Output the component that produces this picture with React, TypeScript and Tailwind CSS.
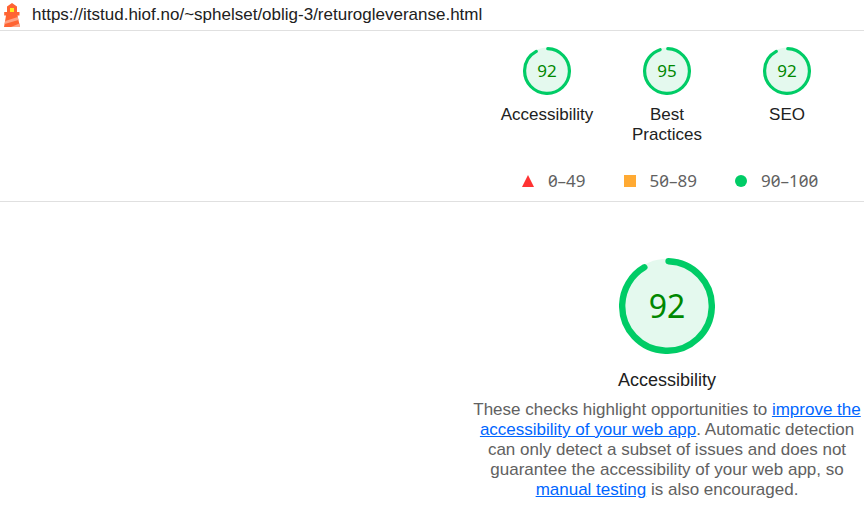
type GaugeProps = {
  score: number;
  size: 'small' | 'large';
};

function Gauge({ score, size }: GaugeProps) {
  const large = size === 'large';
  const stroke = 8;
  const r = 60 - stroke / 2;
  const circumference = 2 * Math.PI * r;
  const filled = (score / 100) * circumference - stroke / 2;
  return (
    <div className={large ? 'grid size-24 place-items-center' : 'grid size-12 place-items-center'}>
      <svg viewBox="0 0 120 120" className="col-start-1 row-start-1 size-full" aria-hidden="true">
        <circle cx="60" cy="60" r="59" fill="#e4f9ee" />
        <circle
          cx="60"
          cy="60"
          r={r}
          fill="none"
          stroke="#00cc66"
          strokeWidth={stroke}
          strokeLinecap="round"
          strokeDasharray={`${filled} ${circumference}`}
          transform="rotate(-88 60 60)"
        />
      </svg>
      <span
        className={
          large
            ? "col-start-1 row-start-1 font-['Noto_Sans',sans-serif] text-[32px] leading-10 text-[#008800]"
            : "col-start-1 row-start-1 font-['Noto_Sans',sans-serif] text-[17px] leading-5 text-[#008800]"
        }
      >
        {score}
      </span>
    </div>
  );
}

function Lighthouse() {
  return (
    <svg viewBox="0 0 24 30" className="h-[30px] w-6 shrink-0" aria-hidden="true">
      <path d="M12 3l5 3.500V12h2.500v3.500H17.500L20 27H4l2-11.500H4.200V12H7V6.500z" fill="#ff6433" />
      <path d="M10 8h4v4h-4z" fill="#ffea1e" />
      <path d="M17.800 17l.6 3L4.700 24l.6-3zM19.400 23.500l.6 3.500h-9z" fill="#ffa385" />
    </svg>
  );
}

const scores = [
  { label: 'Accessibility', score: 92 },
  { label: 'Best Practices', score: 95 },
  { label: 'SEO', score: 92 },
];

export default function App() {
  return (
    <div className="min-h-screen bg-white font-['Liberation_Sans',Arial,sans-serif] text-[#212121]">
      <header className="flex h-[31px] items-center gap-2 border-b border-[#e0e0e0]">
        <Lighthouse />
        <span className="text-[17px] leading-5">
          https://itstud.hiof.no/~sphelset/oblig-3/returogleveranse.html
        </span>
      </header>
      <main>
        <section className="border-b border-[#e0e0e0] pt-4 pb-[10px]">
          <div className="ml-auto w-[394px]">
            <div className="flex justify-center">
              {scores.map((item) => (
                <div key={item.label} className="flex w-[120px] flex-col items-center gap-[10px] px-3 text-center">
                  <Gauge score={item.score} size="small" />
                  <span className="text-[17px] leading-5">{item.label}</span>
                </div>
              ))}
            </div>
            <ul className="mt-[26px] flex justify-center gap-[38px] pl-[6px] font-['Noto_Sans',sans-serif] text-[17px] leading-5 text-[#616161] slashed-zero">
              <li className="flex items-center gap-[14px]">
                <svg viewBox="0 0 12 12" className="size-3" aria-hidden="true">
                  <path d="M6 0l6 12H0z" fill="#ff3333" />
                </svg>
                0–49
              </li>
              <li className="flex items-center gap-[14px]">
                <span className="size-3 bg-[#ffaa33]" />
                50–89
              </li>
              <li className="flex items-center gap-[14px]">
                <span className="size-3 rounded-full bg-[#00cc66]" />
                90–100
              </li>
            </ul>
          </div>
        </section>
        <section className="ml-auto flex w-[394px] flex-col items-center pt-14">
          <Gauge score={92} size="large" />
          <h2 className="mt-4 text-lg leading-5">Accessibility</h2>
          <p className="mt-[10px] text-center text-[17px] leading-5 text-[#616161]">
            These checks highlight opportunities to{' '}
            <a href="#improve" className="text-[#0066ff] underline">
              improve the accessibility of your web app
            </a>
            . Automatic detection can only detect a subset of issues and does not guarantee the
            accessibility of your web app, so{' '}
            <a href="#manual" className="text-[#0066ff] underline">
              manual testing
            </a>{' '}
            is also encouraged.
          </p>
        </section>
      </main>
    </div>
  );
}
